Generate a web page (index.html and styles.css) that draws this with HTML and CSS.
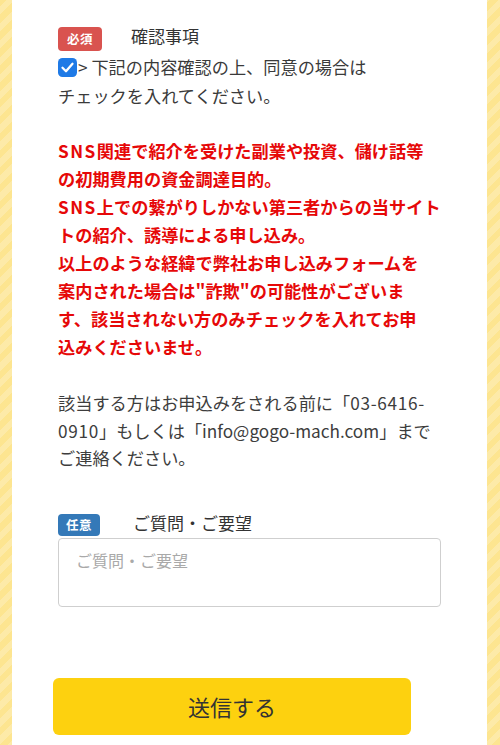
FILE: index.html
```html
<!DOCTYPE html>
<html lang="ja">
<head>
<meta charset="utf-8">
<title>お問い合わせ</title>
<link rel="stylesheet" href="styles.css">
</head>
<body>
<div class="page">
  <div class="panel">
    <div class="field">
      <div class="label-row">
        <span class="badge badge-req">必須</span>
        <span class="label-text">確認事項</span>
      </div>
      <p class="check-line">
        <span class="checkbox"><svg width="19" height="19" viewBox="0 0 19 19"><rect x="0" y="0" width="19" height="19" rx="4.5" fill="#1f7ae6"/><path d="M4.5 9.8 L8 13.2 L14.5 5.8" fill="none" stroke="#fff" stroke-width="2.3" stroke-linecap="round" stroke-linejoin="round"/></svg></span>&gt; 下記の内容確認の上、同意の場合は<br>チェックを入れてください。
      </p>
      <p class="warning"><span class="latin">SNS</span>関連で紹介を受けた副業や投資、儲け話等<br>の初期費用の資金調達目的。<br><span class="latin">SNS</span>上での繋がりしかない第三者からの当サイト<br>トの紹介、誘導による申し込み。<br>以上のような経緯で弊社お申し込みフォームを<br>案内された場合は"詐欺"の可能性がございま<br>す、該当されない方のみチェックを入れてお申<br>込みくださいませ。</p>
      <p class="note">該当する方はお申込みをされる前に「<span class="digits">03-6416-</span><br><span class="digits">0910</span>」もしくは「info@gogo-mach.com」まで<br>ご連絡ください。</p>
    </div>
    <div class="field field-2">
      <div class="label-row">
        <span class="badge badge-opt">任意</span>
        <span class="label-text label-text-2">ご質問・ご要望</span>
      </div>
      <textarea class="textarea" placeholder="ご質問・ご要望"></textarea>
    </div>
    <button class="submit" type="button">送信する</button>
  </div>
</div>
</body>
</html>
```

FILE: styles.css
```css
html, body {
  margin: 0;
  padding: 0;
  height: 745px;
  overflow: hidden;
}
body {
  font-family: "Noto Sans CJK JP", "Liberation Sans", sans-serif;
  color: #3a3a3a;
  background: repeating-linear-gradient(-45deg, #fde590 0px, #fde590 6px, #fdeaa8 6px, #fdeaa8 12px);
}
.page {
  padding: 0 13px 0 12px;
  height: 745px;
}
.panel {
  background: #fff;
  height: 745px;
  padding: 26px 46px 0 46px;
  box-sizing: border-box;
}
.label-row {
  display: flex;
  align-items: center;
  height: 25px;
}
.badge {
  display: inline-flex;
  align-items: center;
  justify-content: center;
  color: #fff;
  font-size: 12.5px;
  font-weight: bold;
  border-radius: 4px;
  height: 24px;
  width: 44px;
  letter-spacing: 0.5px;
}
.badge-req {
  background: #d9534f;
}
.badge-opt {
  background: #3479b8;
  width: 42px;
  height: 22px;
}
.label-text {
  font-size: 17px;
  margin-left: 29px;
  color: #333;
  margin-top: -6px;
}
.label-text-2 {
  margin-left: 33px;
  margin-top: -4px;
}
.check-line {
  margin: 1px 0 0 0;
  font-size: 17.2px;
  line-height: 29px;
}
.checkbox {
  display: inline-block;
  width: 19px;
  height: 19px;
  vertical-align: -3px;
  margin-right: 1px;
}
.checkbox svg {
  display: block;
}
.warning {
  margin: 27px 0 0 0;
  color: #e60808;
  font-weight: bold;
  font-size: 17.2px;
  line-height: 28px;
  white-space: nowrap;
}
.latin {
  letter-spacing: 1.5px;
}
.note {
  margin: 28px 0 0 0;
  font-size: 17.2px;
  line-height: 27.5px;
  white-space: nowrap;
  color: #3d3d3d;
}
.digits {
  letter-spacing: 0.7px;
}
.field-2 {
  margin-top: 42px;
}
.field-2 .label-row {
  height: 22px;
}
.textarea {
  display: block;
  box-sizing: border-box;
  width: 383px;
  height: 69px;
  margin-top: 2px;
  border: 1px solid #cfcfcf;
  border-radius: 4px;
  padding: 9px 17px;
  font-family: "Noto Sans CJK JP", "Liberation Sans", sans-serif;
  font-size: 16px;
  line-height: 24px;
  resize: none;
  outline: none;
}
.textarea::placeholder {
  color: #a9a9a9;
}
.submit {
  display: block;
  margin: 71px 0 0 -5px;
  width: 358px;
  height: 57px;
  border: none;
  border-radius: 6px;
  background: #fdd10f;
  color: #333;
  font-family: "Noto Sans CJK JP", "Liberation Sans", sans-serif;
  font-size: 22px;
  padding: 0;
}
```
